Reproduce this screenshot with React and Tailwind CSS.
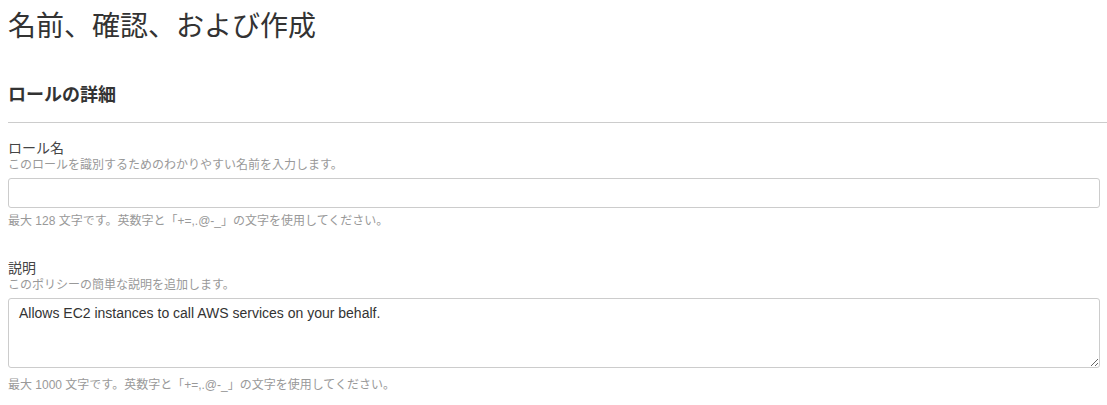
const font = { fontFamily: '"Liberation Sans", "Noto Sans CJK JP", sans-serif' };

function Field({ label, hint, note, noteGap = "mt-[5px]", children }) {
  return (
    <div>
      <div className="text-[14px] leading-[18px] text-[#444]">{label}</div>
      <div className="text-[12px] leading-[16px] text-[#999]">{hint}</div>
      <div className="mt-[5px]">{children}</div>
      <div className={`${noteGap} text-[12px] leading-[16px] text-[#999]`}>{note}</div>
    </div>
  );
}

export default function App() {
  return (
    <div className="bg-white pl-[8px] pr-0 pt-[9px] h-[405px] overflow-hidden" style={font}>
      <h1 className="text-[28px] leading-[36px] font-normal text-[#333]">名前、確認、および作成</h1>
      <h2 className="mt-[38px] text-[18px] leading-[24px] font-bold text-[#333]">ロールの詳細</h2>
      <div className="mt-[15px] border-t border-[#ccc]" />
      <div className="mt-[16px]">
        <Field
          label="ロール名"
          hint="このロールを識別するためのわかりやすい名前を入力します。"
          note="最大 128 文字です。英数字と「+=,.@-_」の文字を使用してください。"
        >
          <input
            type="text"
            className="block w-[1092px] h-[30px] rounded-[3px] border border-[#ccc] bg-white px-[10px] text-[14px] text-[#333] outline-none"
          />
        </Field>
      </div>
      <div className="mt-[30px]">
        <Field
          label="説明"
          hint="このポリシーの簡単な説明を追加します。"
          note="最大 1000 文字です。英数字と「+=,.@-_」の文字を使用してください。"
          noteGap="mt-[9px]"
        >
          <textarea
            className="block w-[1092px] h-[70px] rounded-[3px] border border-[#ccc] bg-white px-[10px] py-[5px] text-[14px] leading-[18px] text-[#333] outline-none"
            style={font}
            defaultValue="Allows EC2 instances to call AWS services on your behalf."
          />
        </Field>
      </div>
    </div>
  );
}
